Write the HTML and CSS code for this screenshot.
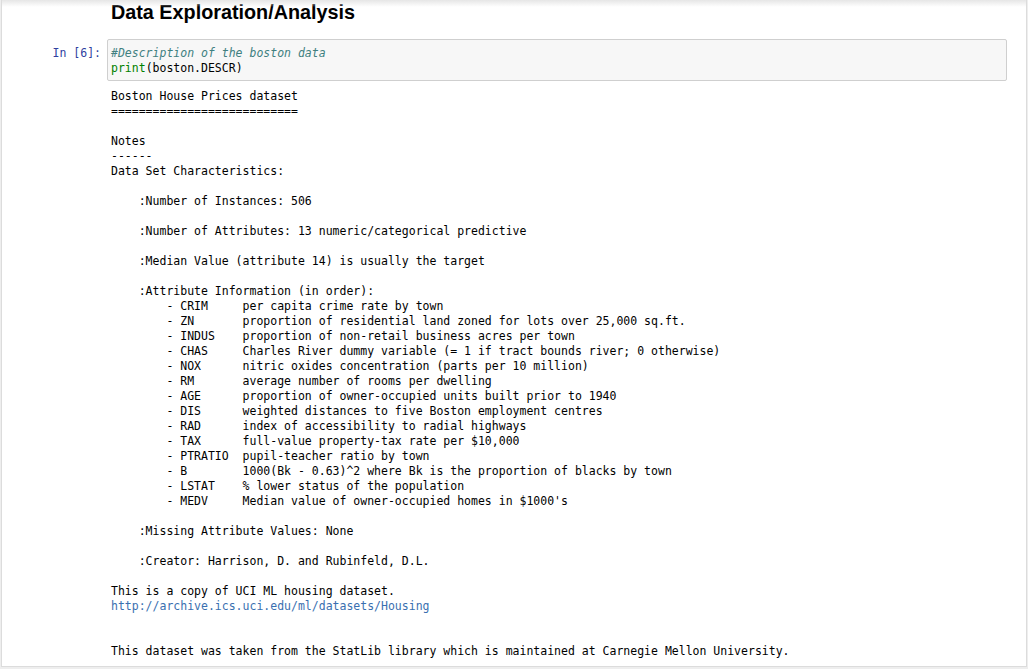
FILE: index.html
```html
<!DOCTYPE html>
<html>
<head>
<meta charset="utf-8">
<link rel="stylesheet" href="styles.css">
</head>
<body>
<div class="notebook">
  <div class="top-shadow"></div>
  <div class="md-cell">
    <h2 class="title">Data Exploration/Analysis</h2>
  </div>
  <div class="code-cell">
    <div class="prompt">In&nbsp;[6]:</div>
    <div class="input-area"><pre class="code"><span class="cm">#Description of the boston data</span>
<span class="kw">print</span>(boston.DESCR)</pre></div>
  </div>
  <div class="output-cell">
    <pre class="output">Boston House Prices dataset
===========================

Notes
------
Data Set Characteristics:

    :Number of Instances: 506

    :Number of Attributes: 13 numeric/categorical predictive

    :Median Value (attribute 14) is usually the target

    :Attribute Information (in order):
        - CRIM     per capita crime rate by town
        - ZN       proportion of residential land zoned for lots over 25,000 sq.ft.
        - INDUS    proportion of non-retail business acres per town
        - CHAS     Charles River dummy variable (= 1 if tract bounds river; 0 otherwise)
        - NOX      nitric oxides concentration (parts per 10 million)
        - RM       average number of rooms per dwelling
        - AGE      proportion of owner-occupied units built prior to 1940
        - DIS      weighted distances to five Boston employment centres
        - RAD      index of accessibility to radial highways
        - TAX      full-value property-tax rate per $10,000
        - PTRATIO  pupil-teacher ratio by town
        - B        1000(Bk - 0.63)^2 where Bk is the proportion of blacks by town
        - LSTAT    % lower status of the population
        - MEDV     Median value of owner-occupied homes in $1000's

    :Missing Attribute Values: None

    :Creator: Harrison, D. and Rubinfeld, D.L.

This is a copy of UCI ML housing dataset.
<a class="link" href="#">http://archive.ics.uci.edu/ml/datasets/Housing</a>


This dataset was taken from the StatLib library which is maintained at Carnegie Mellon University.</pre>
  </div>
</div>
</body>
</html>
```

FILE: styles.css
```css
html, body {
  margin: 0;
  padding: 0;
  background: #eeeeee;
}

.notebook {
  position: relative;
  margin-left: 1px;
  width: 1024px;
  height: 666px;
  background: #ffffff;
  border-left: 1px solid #dcdcdc;
  border-right: 1px solid #dcdcdc;
  border-bottom: 1px solid #dcdcdc;
  overflow: hidden;
}

.top-shadow {
  position: absolute;
  left: 0;
  right: 0;
  top: 0;
  height: 7px;
  background: linear-gradient(to bottom, #e6e6e6, rgba(255,255,255,0));
}

.md-cell {
  padding-left: 109px;
}

.title {
  margin: 0;
  font-family: "Liberation Sans", Arial, sans-serif;
  font-weight: bold;
  font-size: 19.8px;
  line-height: 24px;
  color: #000000;
}

.code-cell {
  display: flex;
  margin-top: 15px;
}

.prompt {
  box-sizing: border-box;
  width: 105px;
  padding-right: 6px;
  padding-top: 7px;
  text-align: right;
  font-family: "DejaVu Sans Mono", "Liberation Mono", monospace;
  font-size: 11.5px;
  line-height: 15px;
  color: #303f9f;
}

.input-area {
  width: 898px;
  background: #f7f7f7;
  border: 1px solid #cfcfcf;
  border-radius: 2px;
}

.code {
  margin: 0;
  padding: 6px 3px 4px 3px;
  font-family: "DejaVu Sans Mono", "Liberation Mono", monospace;
  font-size: 11.5px;
  line-height: 15px;
  color: #000000;
}

.cm {
  font-style: italic;
  color: #408080;
}

.kw {
  color: #008000;
}

.output-cell {
  padding-left: 109px;
  padding-top: 8px;
}

.output {
  margin: 0;
  font-family: "DejaVu Sans Mono", "Liberation Mono", monospace;
  font-size: 11.5px;
  line-height: 15px;
  color: #000000;
}

.link {
  color: #3a6fb0;
  text-decoration: none;
}
```
